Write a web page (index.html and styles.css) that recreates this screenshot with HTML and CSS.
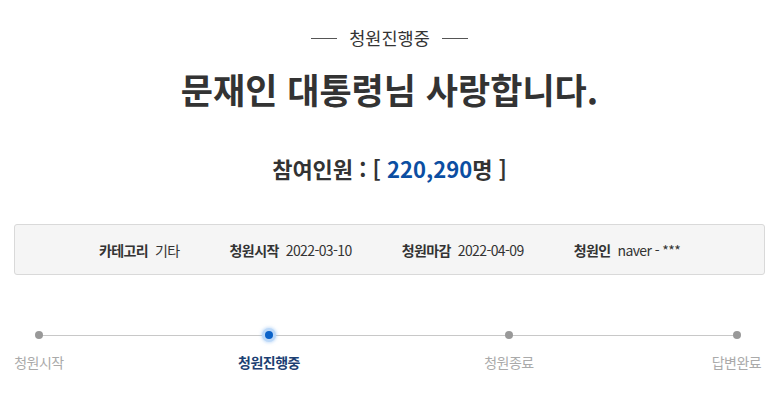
FILE: index.html
```html
<!DOCTYPE html>
<html lang="ko">
<head>
<meta charset="utf-8">
<link rel="stylesheet" href="styles.css">
</head>
<body>
<div class="page">
  <div class="status"><span class="rule"></span><span class="status-text">청원진행중</span><span class="rule"></span></div>
  <h1 class="title">문재인 대통령님 사랑합니다.</h1>
  <p class="count">참여인원 : [ <span class="num">220,290</span>명 ]</p>
  <div class="info">
    <div class="item"><b>카테고리</b><span>기타</span></div>
    <div class="item"><b>청원시작</b><span>2022-03-10</span></div>
    <div class="item"><b>청원마감</b><span>2022-04-09</span></div>
    <div class="item"><b>청원인</b><span>naver - ***</span></div>
  </div>
  <div class="steps">
    <div class="step s1"><span class="dot"></span><span class="label">청원시작</span></div>
    <div class="step s2 active"><span class="dot"></span><span class="label">청원진행중</span></div>
    <div class="step s3"><span class="dot"></span><span class="label">청원종료</span></div>
    <div class="step s4"><span class="dot"></span><span class="label">답변완료</span></div>
  </div>
</div>
</body>
</html>
```
FILE: styles.css
```css
* { box-sizing: border-box; }
html, body { margin: 0; padding: 0; background: #fff; }
body {
  font-family: "Noto Sans CJK KR", "Noto Sans", sans-serif;
  color: #333;
}
.page { width: 779px; }
.status {
  display: flex;
  justify-content: center;
  align-items: center;
  gap: 12px;
  padding-top: 27px;
  height: 49px;
  font-size: 17.5px;
  line-height: 22px;
  color: #333;
}
.rule { width: 26px; height: 1px; background: #555; }
.title {
  margin: 17px 0 0;
  text-align: center;
  font-size: 35px;
  font-weight: 700;
  line-height: 46px;
  color: #333;
}
.count {
  margin: 41px 0 0;
  text-align: center;
  font-size: 22px;
  font-weight: 700;
  line-height: 30px;
  color: #333;
}
.count .num { color: #0b4ea2; }
.info {
  margin: 41px 14px 0;
  height: 51px;
  background: #f5f5f5;
  border: 1px solid #d9d9d9;
  border-radius: 3px;
  display: flex;
  justify-content: center;
  align-items: center;
  gap: 50px;
  font-size: 14px;
  color: #333;
}
.item { display: flex; gap: 7px; align-items: baseline; letter-spacing: -0.6px; }
.item b { font-weight: 700; }
.steps {
  position: relative;
  margin-top: 53px;
  display: flex;
  justify-content: space-between;
}
.steps::before {
  content: "";
  position: absolute;
  left: 39px;
  right: 42px;
  top: 7px;
  height: 1px;
  background: #c8c8c8;
}
.step {
  position: relative;
  display: flex;
  flex-direction: column;
  align-items: center;
  gap: 13px;
}
.s1 { width: 78px; }
.s2 { width: 110px; }
.s3 { width: 98px; }
.s4 { width: 85px; }
.dot {
  width: 8px;
  height: 8px;
  margin-top: 3px;
  border-radius: 50%;
  background: #999;
}
.active .dot {
  background: #0a62c9;
  box-shadow: 0 0 0 3px #bcd8f8, 0 0 3px 4px rgba(150, 195, 245, 0.5);
}
.label { font-size: 14px; line-height: 20px; color: #aaa; letter-spacing: -0.5px; }
.active .label { color: #1c3f73; font-weight: 700; }
```
